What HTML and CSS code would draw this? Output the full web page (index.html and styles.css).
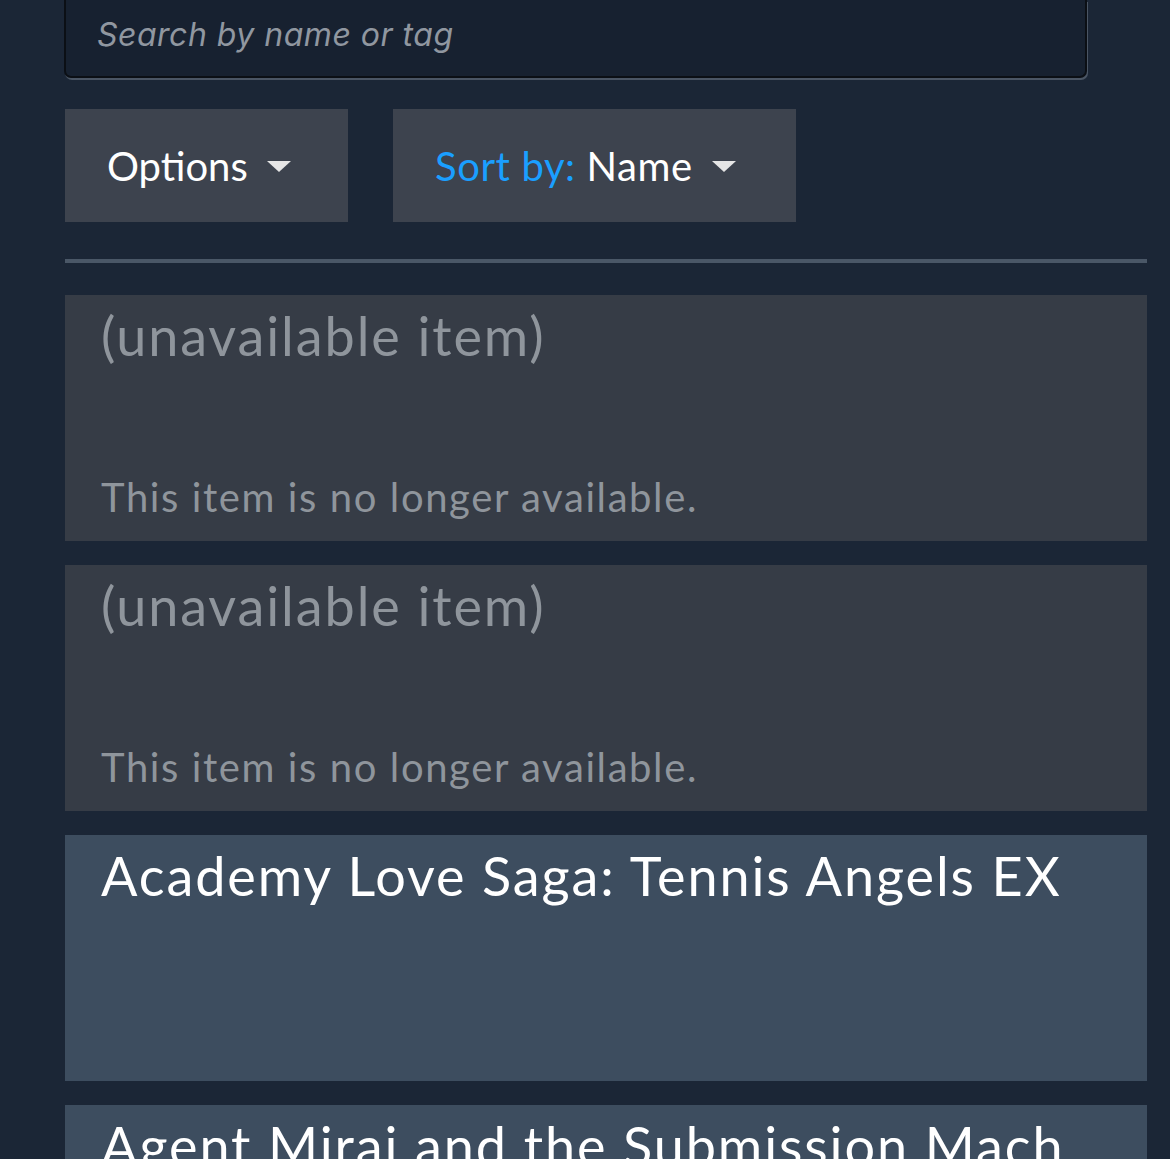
FILE: index.html
```html
<!DOCTYPE html>
<html>
<head>
<meta charset="utf-8">
<link rel="stylesheet" href="styles.css">
</head>
<body>
<div class="page">
  <div class="search"><span class="placeholder">Search by name or tag</span></div>
  <div class="controls">
    <div class="btn btn-options"><span>Options</span><span class="tri"></span></div>
    <div class="btn btn-sort"><span><span class="blue">Sort by:</span> Name</span><span class="tri"></span></div>
  </div>
  <div class="sep"></div>
  <div class="list">
    <div class="card unavail">
      <div class="title">(unavailable item)</div>
      <div class="desc">This item is no longer available.</div>
    </div>
    <div class="card unavail">
      <div class="title">(unavailable item)</div>
      <div class="desc">This item is no longer available.</div>
    </div>
    <div class="card game">
      <div class="title">Academy Love Saga: Tennis Angels EX</div>
    </div>
    <div class="card game">
      <div class="title">Agent Mirai and the Submission Machine</div>
    </div>
  </div>
</div>
</body>
</html>
```

FILE: styles.css
```css
html, body {
  margin: 0;
  padding: 0;
  background: #1b2636;
  overflow: hidden;
  height: 1159px;
}
.page {
  padding: 0 23px 0 65px;
  font-family: "Lato", "Noto Sans", sans-serif;
}
.search {
  background: #172130;
  border: 2px solid #0b0f15;
  border-top: none;
  border-radius: 0 0 7px 7px;
  box-shadow: 1px 2px 0 #4a5564;
  display: flex;
  align-items: center;
  padding-left: 31px;
  margin-left: -1px;
  box-sizing: border-box;
  width: 1023px;
  height: 78px;
}
.placeholder {
  font-family: "Inter", sans-serif;
  font-style: italic;
  font-size: 32px;
  letter-spacing: 0.5px;
  color: #9097a0;
  margin-top: -8px;
}
.controls {
  display: flex;
  gap: 45px;
  margin-top: 31px;
}
.btn {
  height: 113px;
  background: #3d434e;
  display: flex;
  align-items: center;
  padding-left: 42px;
  box-sizing: border-box;
  font-size: 40px;
  color: #ffffff;
}
.btn-options { width: 283px; }
.btn-sort { width: 403px; letter-spacing: 0.6px; }
.blue { color: #1a9fff; }
.tri {
  width: 0;
  height: 0;
  border-left: 12px solid transparent;
  border-right: 12px solid transparent;
  border-top: 11px solid #e6e6e6;
  margin-left: 19px;
  margin-top: 2px;
}
.sep {
  height: 4px;
  background: #4a5767;
  margin-top: 37px;
}
.list {
  margin-top: 32px;
  display: flex;
  flex-direction: column;
  gap: 24px;
}
.card {
  height: 246px;
  box-sizing: border-box;
  padding: 0 36px 0 36px;
  display: flex;
  flex-direction: column;
  justify-content: space-between;
  flex-shrink: 0;
}
.unavail { background: #363c46; }
.game { background: #3d4d5f; }
.title {
  font-size: 54px;
  line-height: 82px;
  letter-spacing: 1.9px;
  white-space: nowrap;
  overflow: hidden;
  text-overflow: ellipsis;
}
.unavail .title { color: #8f959c; }
.game .title { color: #ffffff; }
.desc {
  font-size: 40px;
  letter-spacing: 1.6px;
  line-height: 88px;
  color: #8f959c;
}
```
